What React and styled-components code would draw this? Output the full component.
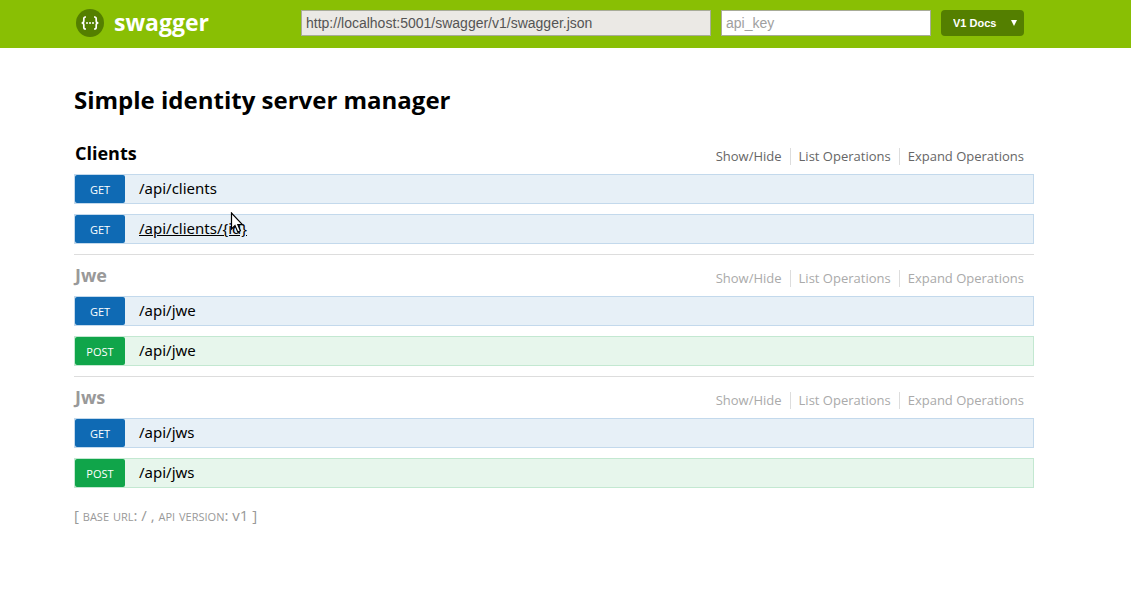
import React from "react";
import styled, { createGlobalStyle } from "styled-components";

const GlobalStyle = createGlobalStyle`
  * { box-sizing: border-box; }
  body {
    margin: 0;
    background: #fff;
    color: #000;
    font-family: "Open Sans", "Noto Sans", sans-serif;
  }
`;

const Header = styled.header`
  background: #89bf04;
  padding: 10px 23px 12px 0;
`;

const HeaderInner = styled.div`
  display: flex;
  align-items: center;
  gap: 10px;
  max-width: 960px;
  margin: 0 auto;
  padding: 0 10px 0 2px;
`;

const Logo = styled.a`
  display: flex;
  align-items: center;
  gap: 10px;
  height: 26px;
  margin-right: auto;
  color: #fff;
  font-size: 23px;
  font-weight: 700;
  line-height: 24px;
  text-decoration: none;
`;

const LogoText = styled.span`
  padding-bottom: 2px;
`;

const TextField = styled.input`
  flex: 0 1 ${(p) => p.$width}px;
  min-width: 0;
  height: 26px;
  padding: 0 4px;
  border: 1px solid #a8ac98;
  border-radius: 0;
  outline: none;
  background: ${(p) => (p.$muted ? "#ebe9e5" : "#fff")};
  color: #545454;
  font-family: "Liberation Sans", Arial, sans-serif;
  font-size: 14px;

  &::placeholder { color: #a0a0a0; opacity: 1; }
`;

const SelectWrap = styled.div`
  position: relative;
  flex: none;
  color: #fff;
`;

const VersionSelect = styled.select`
  display: block;
  appearance: none;
  width: 83px;
  height: 26px;
  padding: 0 24px 0 12px;
  border: 0;
  border-radius: 4px;
  background: #547f00;
  color: #fff;
  font-family: "Liberation Sans", Arial, sans-serif;
  font-size: 11px;
  font-weight: 700;
`;

const SelectArrow = styled.svg`
  position: absolute;
  top: 10px;
  right: 7px;
  pointer-events: none;
`;

const Main = styled.main`
  padding: 35px 23px 40px 0;
`;

const Content = styled.div`
  max-width: 960px;
  margin: 0 auto;
`;

const Title = styled.h1`
  margin: 0 0 17px;
  font-size: 24px;
  font-weight: 700;
  line-height: 33px;
`;

const Resource = styled.section`
  padding-bottom: 10px;
  border-bottom: 1px solid #dddddd;
  color: ${(p) => (p.$active ? "#000" : "#999")};

  &:last-of-type { border-bottom-color: transparent; }
`;

const ResourceHead = styled.div`
  display: flex;
  justify-content: space-between;
  height: 41px;
  padding: 8px 2px 0 1px;
`;

const ResourceName = styled.h2`
  margin: 0;
  font-size: 18px;
  font-weight: 700;
  line-height: 24px;
`;

const Options = styled.ul`
  display: flex;
  margin: 7px 0 0;
  padding: 0;
  list-style: none;
  height: 17px;
`;

const Option = styled.li`
  padding: 0 8px;
  border-left: 1px solid #ddd;
  font-size: 13px;
  line-height: 16px;

  &:first-child { border-left: 0; }
`;

const OptionLink = styled.a`
  color: ${(p) => (p.$active ? "#666" : "#aaa")};
  text-decoration: none;
`;

const Operations = styled.div`
  display: grid;
  gap: 10px;
`;

const tones = {
  GET: { badge: "#0f6ab4", fill: "#e7f0f7", line: "#c3d9ec" },
  POST: { badge: "#10a54a", fill: "#e7f6ec", line: "#c3e8d1" },
};

const OperationRow = styled.div`
  display: flex;
  align-items: flex-start;
  height: 30px;
  border: 1px solid ${(p) => tones[p.$method].line};
  background: ${(p) => tones[p.$method].fill};
`;

const Method = styled.span`
  width: 50px;
  height: 28px;
  border-radius: 2px;
  background: ${(p) => tones[p.$method].badge};
  color: #fff;
  font-size: 11px;
  font-weight: 500;
  line-height: 29px;
  text-align: center;
`;

const Path = styled.a`
  position: relative;
  margin-left: 14px;
  color: #000;
  font-family: "Noto Sans", "Open Sans", sans-serif;
  font-size: 15px;
  line-height: 26px;
  text-decoration: ${(p) => (p.$hovered ? "underline" : "none")};
`;

const Pointer = styled.svg`
  position: absolute;
  top: -3px;
  left: 91px;
`;

const Footer = styled.footer`
  margin-top: 5px;
  color: #999;
  font-size: 15px;
  line-height: 22px;
`;

const SmallCaps = styled.span`
  font-variant: small-caps;
`;

const resources = [
  { name: "Clients", active: true, operations: [["GET", "/api/clients"], ["GET", "/api/clients/{id}", true]] },
  { name: "Jwe", operations: [["GET", "/api/jwe"], ["POST", "/api/jwe"]] },
  { name: "Jws", operations: [["GET", "/api/jws"], ["POST", "/api/jws"]] },
];

function SwaggerMark() {
  return (
    <svg width="28" height="28" viewBox="0 0 28 28" aria-hidden="true">
      <circle cx="14" cy="14" r="14" fill="#547f00" />
      <g fill="none" stroke="#fff" strokeWidth="1.7">
        <path d="M10 8H9.4Q7.8 8 7.8 9.7V12Q7.8 14 5.6 14Q7.8 14 7.8 16V18.3Q7.8 20 9.4 20H10" />
        <path d="M18 8H18.6Q20.2 8 20.2 9.7V12Q20.2 14 22.4 14Q20.2 14 20.2 16V18.3Q20.2 20 18.6 20H18" />
      </g>
      <g fill="#fff">
        <circle cx="11" cy="14" r="1" />
        <circle cx="14" cy="14" r="1" />
        <circle cx="17" cy="14" r="1" />
      </g>
    </svg>
  );
}

function MousePointer() {
  return (
    <Pointer width="14" height="22" viewBox="0 0 14 22" aria-hidden="true">
      <path d="M1.5 1V17L5 13.6L7.8 20L10.4 18.8L7.8 12.6H12.4Z" fill="#fff" stroke="#000" strokeWidth="1.2" />
    </Pointer>
  );
}

export default function App() {
  return (
    <>
      <GlobalStyle />
      <Header>
        <HeaderInner>
          <Logo href="#">
            <SwaggerMark />
            <LogoText>swagger</LogoText>
          </Logo>
          <TextField $width={410} $muted aria-label="Specification URL" defaultValue="http://localhost:5001/swagger/v1/swagger.json" />
          <TextField $width={210} aria-label="API key" placeholder="api_key" />
          <SelectWrap>
            <VersionSelect aria-label="Version">
              <option>V1 Docs</option>
            </VersionSelect>
            <SelectArrow width="6" height="6" viewBox="0 0 6 6" aria-hidden="true">
              <path d="M0 0H6L3 6Z" fill="#fff" />
            </SelectArrow>
          </SelectWrap>
        </HeaderInner>
      </Header>
      <Main>
        <Content>
          <Title>Simple identity server manager</Title>
          {resources.map(({ name, active, operations }) => (
            <Resource key={name} $active={active}>
              <ResourceHead>
                <ResourceName>{name}</ResourceName>
                <Options>
                  {["Show/Hide", "List Operations", "Expand Operations"].map((label) => (
                    <Option key={label}>
                      <OptionLink href="#" $active={active}>{label}</OptionLink>
                    </Option>
                  ))}
                </Options>
              </ResourceHead>
              <Operations>
                {operations.map(([method, path, hovered]) => (
                  <OperationRow key={method + path} $method={method}>
                    <Method $method={method}>{method}</Method>
                    <Path href="#" $hovered={hovered}>
                      {path}
                      {hovered && <MousePointer />}
                    </Path>
                  </OperationRow>
                ))}
              </Operations>
            </Resource>
          ))}
          <Footer>
            [ <SmallCaps>base url</SmallCaps>: / , <SmallCaps>api version</SmallCaps>: v1 ]
          </Footer>
        </Content>
      </Main>
    </>
  );
}
